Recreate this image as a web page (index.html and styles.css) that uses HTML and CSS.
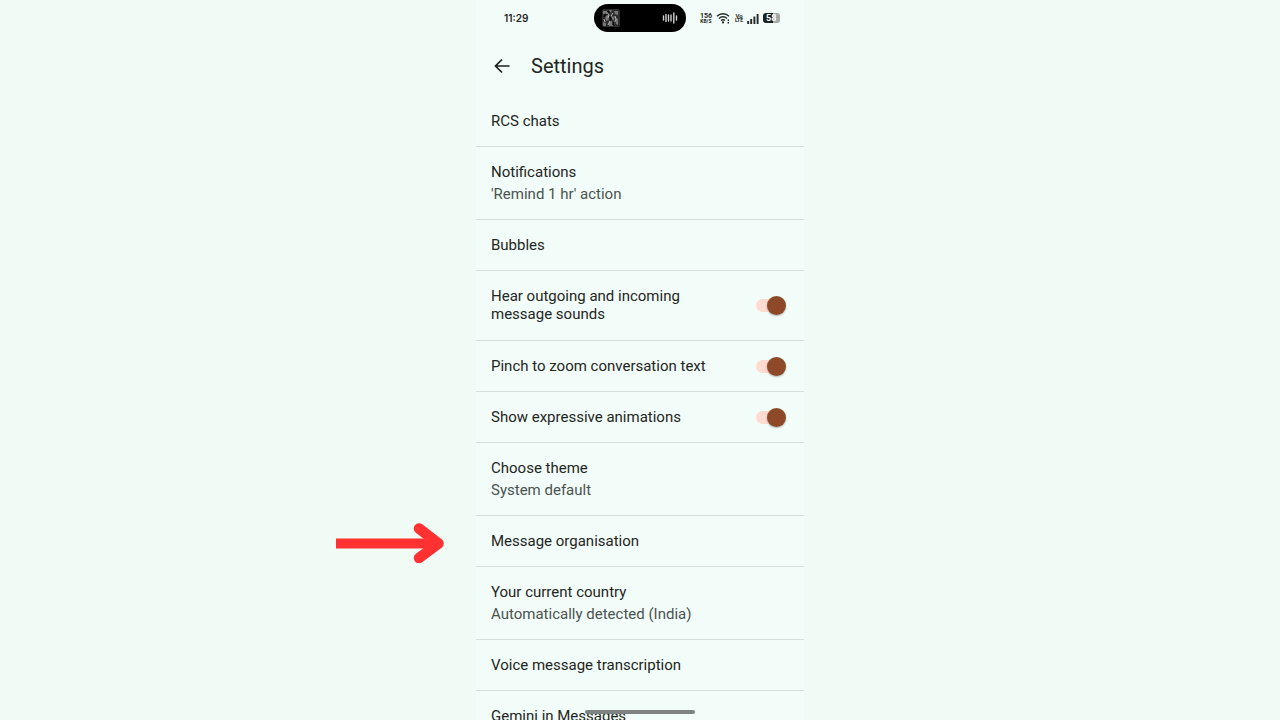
FILE: index.html
```html
<!DOCTYPE html>
<html lang="en">
<head>
<meta charset="utf-8">
<meta name="viewport" content="width=device-width, initial-scale=1">
<title>Settings</title>
<link rel="stylesheet" href="styles.css">
</head>
<body>
<div class="phone">
  <div class="status">
    <span class="clock">11:29</span>
    <div class="island">
      <svg class="cover" viewBox="0 0 18 18" aria-hidden="true">
        <rect width="18" height="18" rx="2" fill="#2c2c2c"/>
        <path d="M1 2h4v3H1zM7 1h3l-1 3zM12 2h4v4l-3-1zM3 7l3-1 1 5-3 1zM9 7l4 1-2 4zM1 13l3 1v3H1zM7 13l3-1 1 5H7zM14 9l2 1v6l-2-1z" fill="#777"/>
        <path d="M5 3l2 3-1 3M11 4l-2 3M13 7l1 3-2 5M2 10l1 3M6 16l2-4" stroke="#bbb" fill="none"/>
        <path d="M6 2l1 2M8 8l1 3M12 13l-1 3M4 5l-2 3" stroke="#0c0c0c" stroke-width="2"/>
      </svg>
      <svg class="wave" viewBox="0 0 16 14" aria-hidden="true">
        <path d="M1.500 5v4M4 3.500v7M6.500 4v6M9 4v6M11.800 2v10M14.500 5v4" stroke="#cfcfcf" stroke-width="1.400" stroke-linecap="round"/>
      </svg>
    </div>
    <div class="indicators">
      <span class="stack"><b class="big">156</b><b class="small">KB/S</b></span>
      <svg class="wifi" viewBox="0 0 15 12" aria-hidden="true">
        <path d="M1 4.200a8.500 8.500 0 0 1 12 0M3 6.500a5.600 5.600 0 0 1 8 0M5 8.600a2.900 2.900 0 0 1 4 0" fill="none" stroke="#222826" stroke-width="1.400"/>
        <circle cx="7" cy="10.400" r="1.100" fill="#222826"/>
        <path d="M12.300 7.500v1.500M12.300 10v1.500" fill="none" stroke="#222826" stroke-width="1.400"/>
      </svg>
      <span class="stack"><b class="mid">Vo</b><b class="small">LTE</b></span>
      <svg class="signal" viewBox="0 0 12 11" aria-hidden="true">
        <path d="M1.200 8v3M4.200 6v5M7.400 3.500V11M10.600 1v10" stroke="#222826" stroke-width="1.900"/>
      </svg>
      <span class="battery">58</span>
    </div>
  </div>
  <header class="bar">
    <button class="back" type="button" aria-label="Back">
      <svg viewBox="0 0 16 16" aria-hidden="true"><path d="M15.500 8H2M8 1.500L1.500 8 8 14.500" fill="none" stroke="#1b211f" stroke-width="1.700"/></svg>
    </button>
    <h1 class="title">Settings</h1>
  </header>
  <main class="list">
    <div class="row"><span class="name">RCS chats</span></div>
    <div class="row"><span class="name">Notifications</span><span class="sub">'Remind 1 hr' action</span></div>
    <div class="row"><span class="name">Bubbles</span></div>
    <label class="row row-switch row-tall"><span class="name">Hear outgoing and incoming message sounds</span><input class="switch" type="checkbox" role="switch" checked></label>
    <label class="row row-switch"><span class="name">Pinch to zoom conversation text</span><input class="switch" type="checkbox" role="switch" checked></label>
    <label class="row row-switch"><span class="name">Show expressive animations</span><input class="switch" type="checkbox" role="switch" checked></label>
    <div class="row"><span class="name">Choose theme</span><span class="sub">System default</span></div>
    <div class="row"><span class="name">Message organisation</span>
      <svg class="pointer" viewBox="0 0 108 40" aria-hidden="true"><path d="M0 20.500H99" stroke="#ff3131" stroke-width="10"/><path d="M83 5.500L102.500 20.500 83 35" fill="none" stroke="#ff3131" stroke-width="10.500" stroke-linecap="round" stroke-linejoin="round"/></svg>
    </div>
    <div class="row"><span class="name">Your current country</span><span class="sub">Automatically detected (India)</span></div>
    <div class="row"><span class="name">Voice message transcription</span></div>
    <div class="row"><span class="name">Gemini in Messages</span></div>
  </main>
  <div class="home"></div>
</div>
</body>
</html>
```
FILE: styles.css
```css
* { box-sizing: border-box; }
body {
  margin: 0;
  height: 100vh;
  overflow: hidden;
  background: #f1fbf6;
  color: #1f2624;
  font-family: Roboto, "Liberation Sans", sans-serif;
}
.phone {
  position: relative;
  width: 100%;
  max-width: 328px;
  height: 100%;
  margin: 0 auto;
  background: #f2fcf8;
}
.status {
  display: grid;
  grid-template-columns: 1fr auto 1fr;
  align-items: center;
  height: 36px;
  padding: 0 24px;
}
.clock {
  padding-left: 4px;
  font: 600 10px Inter, sans-serif;
}
.island {
  display: flex;
  align-items: center;
  justify-content: space-between;
  width: 92px;
  height: 28px;
  padding: 0 8px;
  border-radius: 14px;
  background: #000;
}
.cover { width: 18px; height: 18px; }
.wave { width: 16px; height: 14px; }
.indicators {
  display: flex;
  align-items: center;
  justify-content: flex-end;
  gap: 4px;
}
.stack {
  display: flex;
  flex-direction: column;
  align-items: center;
}
.big { font-size: 7px; line-height: 6px; }
.mid { font-size: 6px; line-height: 5px; }
.small { font-size: 5px; line-height: 5px; }
.wifi { width: 15px; height: 12px; }
.signal { width: 12px; height: 11px; }
.battery {
  width: 17px;
  height: 10px;
  padding-left: 3px;
  border-radius: 3px;
  background: linear-gradient(90deg, #1b211f 60%, #a2aaa6 60%);
  color: #fff;
  font-size: 9px;
  font-weight: 700;
  line-height: 10px;
}
.bar {
  display: flex;
  align-items: center;
  gap: 20px;
  height: 60px;
  padding: 0 17px;
}
.back {
  display: flex;
  padding: 1px;
  border: 0;
  background: none;
}
.back svg { width: 16px; height: 16px; }
.title {
  margin: 0;
  font-size: 20px;
  font-weight: 400;
  line-height: 24px;
}
.row {
  position: relative;
  display: flex;
  flex-direction: column;
  gap: 4px;
  padding: 16px 15px;
  border-bottom: 1px solid #d5dedb;
  font-size: 15px;
  line-height: 18px;
}
.row-switch {
  flex-direction: row;
  align-items: center;
  justify-content: space-between;
  gap: 32px;
}
.row-tall { padding-bottom: 17px; }
.sub { color: #4b5351; }
.switch {
  position: relative;
  flex: none;
  appearance: none;
  width: 28px;
  height: 13px;
  margin: 0 5px 0 0;
  border-radius: 7px;
  background: #ffdad0;
}
.switch::before {
  content: "";
  position: absolute;
  top: -3px;
  right: -2px;
  width: 19px;
  height: 19px;
  border-radius: 50%;
  background: #8e4a28;
  box-shadow: 0 1px 2px #0000004d;
}
.switch:not(:checked)::before { right: 11px; }
.pointer {
  position: absolute;
  top: 7px;
  right: 100%;
  width: 108px;
  height: 40px;
  margin-right: 32px;
}
.home {
  position: absolute;
  bottom: 6px;
  left: 50%;
  width: 110px;
  height: 4px;
  margin-left: -55px;
  border-radius: 2px;
  background: #7d8481;
}
```
